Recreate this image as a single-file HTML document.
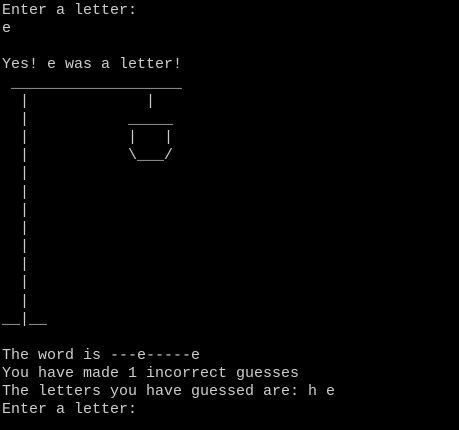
<!DOCTYPE html>
<html><head><style>
html,body{margin:0;padding:0;background:#000;width:459px;height:430px;overflow:hidden}
pre{margin:0;position:absolute;left:2px;top:2px;font-family:"Liberation Mono",monospace;font-size:15px;line-height:18.15px;color:#cccccc;white-space:pre}
</style></head><body><pre>Enter a letter:
e

Yes! e was a letter!
 ___________________
  |             |
  |           _____
  |           |   |
  |           \___/
  |
  |
  |
  |
  |
  |
  |
  |
__|__

The word is ---e-----e
You have made 1 incorrect guesses
The letters you have guessed are: h e
Enter a letter:</pre></body></html>
